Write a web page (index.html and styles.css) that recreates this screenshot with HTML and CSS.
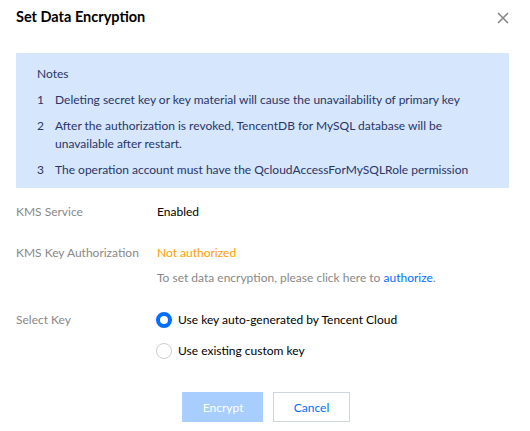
FILE: index.html
```html
<!DOCTYPE html>
<html>
<head>
<meta charset="utf-8">
<link rel="stylesheet" href="styles.css">
</head>
<body>
<div class="dialog">
  <div class="header">
    <h2 class="title">Set Data Encryption</h2>
    <button class="close" aria-label="Close">
      <svg width="12" height="12" viewBox="0 0 12 12"><path d="M1 1L11 11M11 1L1 11" stroke="#888" stroke-width="1.6"/></svg>
    </button>
  </div>
  <div class="notes">
    <div class="notes-title">Notes</div>
    <ol class="notes-list">
      <li><span class="num">1</span><span>Deleting secret key or key material will cause the unavailability of primary key</span></li>
      <li><span class="num">2</span><span>After the authorization is revoked, TencentDB for MySQL database will be unavailable after restart.</span></li>
      <li><span class="num">3</span><span>The operation account must have the QcloudAccessForMySQLRole permission</span></li>
    </ol>
  </div>
  <div class="form">
    <div class="row r1">
      <div class="label">KMS Service</div>
      <div class="value">Enabled</div>
    </div>
    <div class="row r2">
      <div class="label">KMS Key Authorization</div>
      <div class="value">
        <div class="warn">Not authorized</div>
        <div class="hint">To set data encryption, please click here to <a class="link" href="#">authorize</a>.</div>
      </div>
    </div>
    <div class="row r3">
      <div class="label">Select Key</div>
      <div class="value radios">
        <label class="radio"><span class="dot checked"></span><span>Use key auto-generated by Tencent Cloud</span></label>
        <label class="radio"><span class="dot"></span><span>Use existing custom key</span></label>
      </div>
    </div>
  </div>
  <div class="footer">
    <button class="btn primary">Encrypt</button>
    <button class="btn">Cancel</button>
  </div>
</div>
</body>
</html>
```
FILE: styles.css
```css
* { box-sizing: border-box; }
html, body { margin: 0; background: #fff; }
body {
  font-family: Lato, "Open Sans", sans-serif;
  font-size: 12px;
  color: #000;
}
.dialog {
  width: 530px;
  padding: 7px 21px 0 16px;
}
.header {
  display: flex;
  justify-content: space-between;
  align-items: center;
  height: 20px;
}
.title {
  margin: 0;
  font-size: 14.5px;
  font-weight: 700;
  line-height: 20px;
  color: #000;
}
.close {
  border: 0;
  background: none;
  padding: 0;
  width: 12px;
  height: 12px;
  display: block;
  margin-top: 2px;
}
.close svg { display: block; }
.notes {
  margin-top: 26px;
  width: 493px;
  background: #d5e6fd;
  padding: 12px 20px 9px 21px;
  color: #2a3566;
  line-height: 18px;
}
.notes-title { margin-bottom: 8px; }
.notes-list {
  list-style: none;
  margin: 0;
  padding: 0;
  display: flex;
  flex-direction: column;
  gap: 8px;
}
.notes-list li { display: flex; }
.num { width: 18px; flex: none; }
.form {
  margin-top: 15px;
  display: flex;
  flex-direction: column;
  line-height: 18px;
}
.row {
  display: grid;
  grid-template-columns: 141px 1fr;
}
.r2 { margin-top: 23px; }
.r3 { margin-top: 24px; }
.label { color: #888; }
.warn { color: #ff9d00; }
.hint { color: #888; margin-top: 7px; }
.link { color: #006eff; text-decoration: none; }
.radios {
  display: flex;
  flex-direction: column;
  gap: 13px;
}
.radio {
  display: flex;
  align-items: center;
  gap: 6px;
  color: #000;
  margin-left: -1px;
}
.dot {
  width: 16px;
  height: 16px;
  border-radius: 50%;
  border: 1px solid #ccc;
  background: #fff;
  flex: none;
}
.dot.checked { border: 4px solid #006eff; }
.footer {
  display: flex;
  justify-content: center;
  gap: 10px;
  margin-top: 32px;
  padding-left: 7px;
}
.btn {
  height: 30px;
  min-width: 77px;
  padding: 0 20px;
  font-family: inherit;
  font-size: 12px;
  background: #fff;
  border: 1px solid #cfd5de;
  color: #006eff;
}
.btn.primary {
  width: 81px;
  background: #a8cdff;
  border-color: #a8cdff;
  color: #fff;
}
```
